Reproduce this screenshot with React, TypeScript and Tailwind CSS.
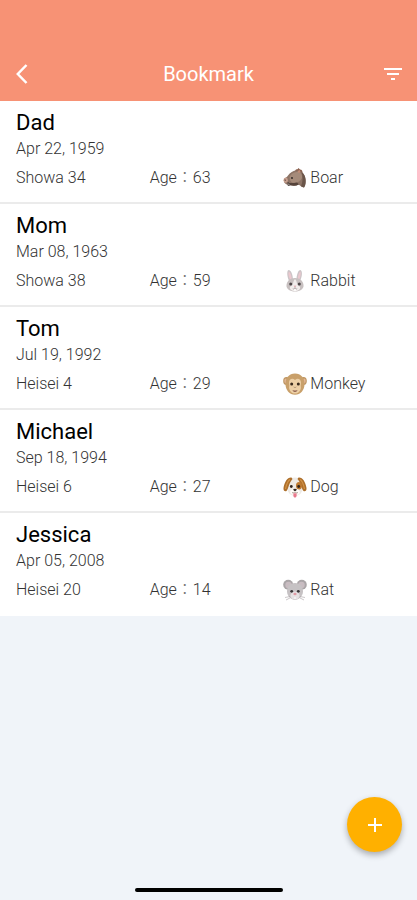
import type { ReactNode } from "react";
import { MdAdd, MdFilterList } from "react-icons/md";

interface Person {
  name: string;
  date: string;
  era: string;
  age: number;
  animal: string;
  icon: ReactNode;
}

const iconClass = "h-6 w-6 shrink-0";

const BoarIcon = () => (
  <svg viewBox="0 0 24 24" className={iconClass} aria-hidden="true">
    <path d="M12 6c0-2 1-3.200 2.500-2.700L15.500 2l1.500 1.500c2 0 2.500 1 2.500 4z" fill="#8a5f4c" />
    <path d="M1 13c2-1.500 3-2 4-3.500C7 6.500 10 4.500 14 4.500c5 0 8 3.500 8.500 9 .3 3-.2 5.500-1.500 8-2.500-.5-4-2-5.500-3-3 1.500-6 1.500-9 .5-2.500 0-4.500-1-5.500-3z" fill="#8d7466" />
    <path d="M7 10c2-3 5-4.300 8-4 3 .5 4.500 3 4 6-1.500 4-6 5.500-10 4.500-2-1.500-3-4-2-6.500z" fill="#a58b7a" />
    <path d="M18.500 6c3.500 2.500 4.800 7 4 12-.3 1.500-.7 2.500-1.500 3.500-1-.2-2-.7-3-1.300 2-4.500 2-9.500.5-14.200z" fill="#6a5549" />
    <path d="M4 16.500c3 .8 6 .8 10 0l2 2c-3 1.500-6 1.500-9 .5z" fill="#55433a" />
    <ellipse cx="2.700" cy="14.200" rx="2.200" ry="2.600" fill="#c79f8e" />
    <path d="M2 13.400l.3 1.500M5 19.500l.3-3 2 2.600z" stroke="#3a302c" strokeWidth=".8" fill="#f3ece3" />
    <circle cx="9" cy="12" r=".9" fill="#28211f" />
    <path d="M14.500 5l2.300-1 .8 2.400-2.100.6z" fill="#c18c76" />
  </svg>
);

const RabbitIcon = () => (
  <svg viewBox="0 0 24 24" className={iconClass} aria-hidden="true">
    <path d="M6.500 13C4 8 3.500 2 5.500 1c3 0 4.500 6 4.500 10zM13.500 11c0-5 1.500-10 4-10 2.500 1 1.500 8-1 12z" fill="#ccc4c7" />
    <path d="M7.500 11C5.500 8 5 4 6 2.500c1.700 1.500 2.800 5 2.800 8zM14.800 11c0-4 1-7.500 2.500-8.500 1 1.500.2 5.500-1.300 8.500z" fill="#ebc8ce" />
    <path d="M12 9c5 0 8 3 8.500 7 .5 4-3.500 6.500-8.500 6.500S3 20 3.500 16c.5-4 3.500-7 8.500-7z" fill="#c7c0c0" />
    <path d="M12 10c2 2 1.500 4 2.500 6 2 1 3 2 2.500 3.500-.7 2-3 2.700-5 2.700s-4.300-.7-5-2.700C6.500 18 7.500 17 9.500 16c1-2 .5-4 2.500-6z" fill="#f1edec" />
    <circle cx="7.700" cy="15" r="1.500" fill="#4c4547" />
    <circle cx="16.300" cy="15" r="1.500" fill="#4c4547" />
    <path d="M10.600 16.700h2.800L12 18z" fill="#d58e98" />
    <path d="M12 18v1.200m-2.200.5c1 .7 2.200 0 2.200-.5 0 .5 1.200 1.200 2.200.5" stroke="#8b7e80" strokeWidth=".6" fill="none" />
    <path d="M11 20.300h2v1.500h-2z" fill="#fff" />
  </svg>
);

const MonkeyIcon = () => (
  <svg viewBox="0 0 24 24" className={iconClass} aria-hidden="true">
    <ellipse cx="3.500" cy="9" rx="3.300" ry="4" fill="#bd9560" />
    <ellipse cx="20.500" cy="9" rx="3.300" ry="4" fill="#bd9560" />
    <ellipse cx="2.900" cy="9" rx="1.600" ry="2.400" fill="#e3b596" />
    <ellipse cx="21.100" cy="9" rx="1.600" ry="2.400" fill="#e3b596" />
    <path d="M12 1.500c6 0 9.500 4.500 9.500 10.500S17.500 22.800 12 22.800 2.500 18 2.500 12 6 1.500 12 1.500z" fill="#c9a06a" />
    <path d="M12 8c2.500-2.500 6-1 6 2.500 0 1.200-.3 2.200-.3 3.200 1 4.300-2 7.800-5.700 7.800s-6.700-3.500-5.700-7.800c0-1-.3-2-.3-3.200C6 7 9.500 5.500 12 8z" fill="#edd0a6" />
    <circle cx="8.700" cy="12" r="1.500" fill="#3a2a1c" />
    <circle cx="15.300" cy="12" r="1.500" fill="#3a2a1c" />
    <path d="M10.800 15l.7.400m1.700-.4l-.7.400" stroke="#674a31" strokeWidth=".8" />
    <path d="M9.500 18c1.700.8 3.300.8 5 0-.5 2.500-4.500 2.500-5 0z" fill="#8a5a4a" />
  </svg>
);

const DogIcon = () => (
  <svg viewBox="0 0 24 24" className={iconClass} aria-hidden="true">
    <path d="M12 2.500c5.500 0 8 4 8 9.500 0 5-3.500 9-8 9s-8-4-8-9c0-5.500 2.500-9.500 8-9.500z" fill="#eeeae5" />
    <path d="M8.500 2.500C4.500 2 1.500 7 .500 13c-.4 2.500 1.500 4 3 3C5.500 14 5.500 8.500 9.500 4zM15.500 2.500c4-.5 7 4.500 8 10.500.4 2.500-1.500 4-3 3C18.500 14 18.500 8.500 14.500 4z" fill="#ad6f2b" />
    <path d="M7 4.500C4.500 6 3.300 10 2.500 14M17 4.500c2.500 1.500 3.700 5.500 4.500 9.500" stroke="#d29347" strokeWidth="1.200" fill="none" />
    <ellipse cx="16" cy="10.800" rx="3" ry="3.700" fill="#bd7930" />
    <circle cx="8.300" cy="11.500" r="1.400" fill="#30251e" />
    <circle cx="15.700" cy="11.500" r="1.400" fill="#30251e" />
    <ellipse cx="12" cy="17" rx="4.800" ry="3" fill="#fffdf9" />
    <path d="M10.200 14.200c1.100-.7 2.500-.7 3.600 0 0 1-1.100 1.800-1.800 1.800s-1.800-.8-1.800-1.800z" fill="#30251e" />
    <path d="M9 17.500c1.500 1 2.600 0 3-.7.400.7 1.500 1.700 3 .7" stroke="#76655a" strokeWidth=".6" fill="none" />
    <path d="M10.400 18.300h3.200v2.200c0 2.700-3.200 2.700-3.200 0z" fill="#e8798c" />
  </svg>
);

const RatIcon = () => (
  <svg viewBox="0 0 24 24" className={iconClass} aria-hidden="true">
    <circle cx="5.200" cy="6.700" r="5" fill="#aaa5a7" />
    <circle cx="18.800" cy="6.700" r="5" fill="#aaa5a7" />
    <circle cx="5.500" cy="7" r="3.200" fill="#c8bcc1" />
    <circle cx="18.500" cy="7" r="3.200" fill="#c8bcc1" />
    <path d="M12 5c5.500 0 8 4 8 8.500 0 4.500-4.500 8.500-8 8.500s-8-4-8-8.500C4 9 6.500 5 12 5z" fill="#c6c2c4" />
    <ellipse cx="12" cy="17.500" rx="4.500" ry="4" fill="#e6e2e4" />
    <circle cx="8.700" cy="13.300" r="1.400" fill="#363135" />
    <circle cx="15.300" cy="13.300" r="1.400" fill="#363135" />
    <ellipse cx="12" cy="16" rx="1.600" ry="1.200" fill="#df9aa4" />
    <path d="M7 18.500l-5 1M7.300 19.800l-4.300 2.200M17 18.500l5 1m-5.300.3l4.300 2.200" stroke="#a7a1a4" strokeWidth=".6" />
    <path d="M11.300 19.200h1.400v1.500h-1.400z" fill="#fff" />
  </svg>
);

const people: Person[] = [
  { name: "Dad", date: "Apr 22, 1959", era: "Showa 34", age: 63, animal: "Boar", icon: <BoarIcon /> },
  { name: "Mom", date: "Mar 08, 1963", era: "Showa 38", age: 59, animal: "Rabbit", icon: <RabbitIcon /> },
  { name: "Tom", date: "Jul 19, 1992", era: "Heisei 4", age: 29, animal: "Monkey", icon: <MonkeyIcon /> },
  { name: "Michael", date: "Sep 18, 1994", era: "Heisei 6", age: 27, animal: "Dog", icon: <DogIcon /> },
  { name: "Jessica", date: "Apr 05, 2008", era: "Heisei 20", age: 14, animal: "Rat", icon: <RatIcon /> },
];

const Header = () => (
  <header className="flex items-center justify-between bg-[#f79275] px-2 pt-[50px] pb-[3px] text-white">
    <button type="button" aria-label="Back" className="flex h-12 w-12 items-center pl-2">
      <svg viewBox="0 0 12 20" className="h-5 w-3" fill="none" stroke="currentColor" strokeWidth="2.500" aria-hidden="true">
        <path d="M10.500 1L1.800 10l8.700 9" />
      </svg>
    </button>
    <h1 className="text-xl">Bookmark</h1>
    <button type="button" aria-label="Sort" className="flex h-12 w-12 items-center justify-end pr-1">
      <MdFilterList className="h-6 w-6" />
    </button>
  </header>
);

const PersonRow = ({ person }: { person: Person }) => (
  <li className="border-b-2 border-[#ebebeb] bg-white pt-2 pb-3 pl-4 last:border-white">
    <h2 className="text-[22px] leading-7 text-black">{person.name}</h2>
    <p className="text-base leading-6 font-light text-[#333]">{person.date}</p>
    <div className="mt-[5px] grid grid-cols-3 items-center text-base leading-6 font-light text-[#333]">
      <span>{person.era}</span>
      <span>
        Age<span className="text-[#777]">：</span>
        {person.age}
      </span>
      <span className="flex items-center gap-[3px]">
        {person.icon}
        {person.animal}
      </span>
    </div>
  </li>
);

export default function App() {
  return (
    <div className="flex min-h-screen flex-col bg-[#f0f4f9] font-[Roboto,'Noto_Sans_CJK_JP',sans-serif]">
      <Header />
      <main className="flex-1">
        <ul>
          {people.map((person) => (
            <PersonRow key={person.name} person={person} />
          ))}
        </ul>
      </main>
      <button
        type="button"
        aria-label="Add person"
        className="fixed right-[15px] bottom-12 flex h-[55px] w-[55px] items-center justify-center rounded-full bg-[#ffb000] text-white shadow-[0_3px_6px_rgba(0,0,0,0.3)]"
      >
        <MdAdd className="h-6 w-6" />
      </button>
      <div className="fixed inset-x-0 bottom-2 flex justify-center">
        <div className="h-1 w-[148px] rounded-full bg-black" />
      </div>
    </div>
  );
}
